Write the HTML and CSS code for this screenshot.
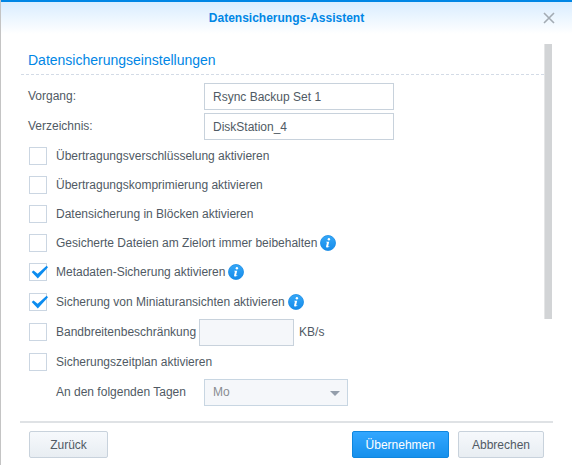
FILE: index.html
```html
<!DOCTYPE html>
<html lang="de">
<head>
    <meta charset="utf-8">
    <meta name="viewport" content="width=device-width, initial-scale=1.0">
    <title>Datensicherungs-Assistent</title>
    <link rel="stylesheet" href="styles.css">
</head>
<body>
    <svg class="sprite" width="0" height="0" aria-hidden="true">
        <linearGradient id="info-fill" x1="0" y1="0" x2="0" y2="1">
            <stop offset="0" stop-color="#35a8f8"/>
            <stop offset="1" stop-color="#158bea"/>
        </linearGradient>
        <symbol id="info" viewBox="0 0 16 16">
            <circle cx="8" cy="8" r="7.5" fill="url(#info-fill)" stroke="#168ae4" stroke-width="0.8"/>
            <circle cx="8.9" cy="4.3" r="1.2" fill="#fff"/>
            <path d="M6.2 6.7H9.2L8.1 11.2Q8.1 11.7 9.2 10.9L9.5 11.2Q8.3 12.7 7 12.6Q5.8 12.4 6.1 11.2L7 7.5L6 7.3Z" fill="#fff"/>
        </symbol>
    </svg>

    <div class="dialog">
        <div class="header">
            <h1 class="title">Datensicherungs-Assistent</h1>
            <button type="button" class="close-button" aria-label="Schließen">
                <svg width="12" height="12" viewBox="0 0 12 12"><path d="M1 1L11 11M11 1L1 11" stroke="#a3abb3" stroke-width="1.6" fill="none"/></svg>
            </button>
        </div>

        <div class="content">
            <form class="settings" id="settings">
                <h2 class="section-title">Datensicherungseinstellungen</h2>

                <div class="row">
                    <label class="label" for="task">Vorgang:</label>
                    <input type="text" class="text-input" id="task" value="Rsync Backup Set 1">
                </div>
                <div class="row">
                    <label class="label" for="directory">Verzeichnis:</label>
                    <input type="text" class="text-input" id="directory" value="DiskStation_4">
                </div>

                <div class="row compact">
                    <input type="checkbox" class="checkbox" id="encrypt">
                    <label for="encrypt">Übertragungsverschlüsselung aktivieren</label>
                </div>
                <div class="row compact">
                    <input type="checkbox" class="checkbox" id="compress">
                    <label for="compress">Übertragungskomprimierung aktivieren</label>
                </div>
                <div class="row compact">
                    <input type="checkbox" class="checkbox" id="block">
                    <label for="block">Datensicherung in Blöcken aktivieren</label>
                </div>
                <div class="row compact">
                    <input type="checkbox" class="checkbox" id="keep">
                    <label for="keep">Gesicherte Dateien am Zielort immer beibehalten</label>
                    <svg class="info-icon"><use href="#info"/></svg>
                </div>
                <div class="row">
                    <input type="checkbox" class="checkbox" id="metadata" checked>
                    <label for="metadata">Metadaten-Sicherung aktivieren</label>
                    <svg class="info-icon"><use href="#info"/></svg>
                </div>
                <div class="row">
                    <input type="checkbox" class="checkbox" id="thumbs" checked>
                    <label for="thumbs">Sicherung von Miniaturansichten aktivieren</label>
                    <svg class="info-icon"><use href="#info"/></svg>
                </div>
                <div class="row">
                    <input type="checkbox" class="checkbox" id="bandwidth">
                    <label for="bandwidth">Bandbreitenbeschränkung</label>
                    <input type="text" class="text-input short" id="limit" aria-label="Bandbreite" disabled>
                    <label for="limit">KB/s</label>
                </div>
                <div class="row">
                    <input type="checkbox" class="checkbox" id="schedule">
                    <label for="schedule">Sicherungszeitplan aktivieren</label>
                </div>
                <div class="row">
                    <label class="label indent" for="days">An den folgenden Tagen</label>
                    <div class="select-box">
                        <select class="select" id="days" disabled>
                            <option>Mo</option>
                        </select>
                        <svg class="arrow" width="10" height="5" viewBox="0 0 10 5"><path d="M0 0H10L5 5Z" fill="#949eab"/></svg>
                    </div>
                </div>
            </form>
            <div class="scrollbar"><div class="thumb"></div></div>
        </div>

        <div class="footer">
            <button type="button" class="button">Zurück</button>
            <button type="submit" form="settings" class="button primary">Übernehmen</button>
            <button type="button" class="button">Abbrechen</button>
        </div>
    </div>
</body>
</html>
```

FILE: styles.css
```css
* {
    box-sizing: border-box;
}

body {
    margin: 0;
    background-color: #fff;
    color: #505a64;
    font-family: "Liberation Sans", Arial, sans-serif;
    font-size: 12px;
}

.sprite {
    position: absolute;
}

.dialog {
    display: flex;
    flex-direction: column;
    min-height: 100vh;
    border-left: 1px solid #c4c4c4;
}

.header {
    display: flex;
    align-items: center;
    height: 34px;
    padding: 0 17px 0 29px;
    border-top: 2px solid #0086e5;
    background: linear-gradient(#d9edff, #fff);
}

.title {
    flex: 1;
    margin: 0;
    color: #0086e5;
    font-size: 12px;
    text-align: center;
}

.close-button {
    display: flex;
    padding: 0;
    border: none;
    background: none;
    cursor: pointer;
}

.content {
    flex: 1;
    display: flex;
    padding: 10px 20px 0 20px;
}

.settings {
    flex: 1;
}

.section-title {
    margin: 0 0 6px 0;
    padding: 8px 7px 5px 7px;
    border-bottom: 1px dashed #d3dbe6;
    color: #0086e5;
    font-size: 14px;
    font-weight: normal;
    line-height: 17px;
}

.row {
    display: flex;
    align-items: center;
    height: 30px;
    padding-left: 7px;
}

.row.compact {
    height: 29px;
}

.label {
    width: 176px;
}

.label.indent {
    padding-left: 28px;
}

.text-input {
    width: 190px;
    height: 27px;
    padding: 1px 8px 0 8px;
    border: 1px solid #c8d2dc;
    background-color: #fff;
    color: #505a64;
    font: inherit;
}

.text-input.short {
    width: 95px;
    margin: 0 5px 0 3px;
}

.text-input:disabled {
    background-color: #f5f7fa;
}

.checkbox {
    appearance: none;
    width: 18px;
    height: 18px;
    margin: 0 9px 0 1px;
    border: 1px solid #cbd6e2;
    background-color: #fff;
}

.checkbox:checked {
    position: relative;
}

.checkbox:checked::before {
    content: "";
    position: absolute;
    left: 1px;
    top: 1px;
    width: 17px;
    height: 14px;
    background-color: #0b8cf0;
    clip-path: polygon(4% 50%, 15% 40%, 39% 62%, 92% 6%, 100% 16%, 40% 96%);
}

.info-icon {
    width: 16px;
    height: 16px;
    margin-left: 3px;
}

.select-box {
    position: relative;
    width: 144px;
}

.select {
    display: block;
    appearance: none;
    width: 100%;
    height: 27px;
    padding: 0 8px;
    border: 1px solid #c8d6e2;
    border-radius: 0;
    background-color: #f5f7fa;
    color: #888c91;
    font: inherit;
    opacity: 1;
}

.arrow {
    position: absolute;
    right: 8px;
    top: 12px;
    pointer-events: none;
}

.scrollbar {
    width: 8px;
}

.thumb {
    height: 73%;
    border-left: 1px solid #e4e5e6;
    background-color: #d2d4d6;
}

.footer {
    display: flex;
    gap: 9px;
    margin: 0 19px;
    padding: 8px 9px 7px 9px;
    border-top: 2px solid #dfe2e5;
}

.button {
    height: 27px;
    padding: 0 13px;
    border: 1px solid #c8d2dc;
    border-radius: 2px;
    background: linear-gradient(#f6f9fc, #e8edf2);
    color: #505a64;
    font: inherit;
    cursor: pointer;
}

.button:first-child {
    min-width: 79px;
    margin-right: auto;
}

.button.primary {
    border-color: #0f86de;
    background: linear-gradient(#33a7ff, #1690ec);
    color: #fff;
}
```
